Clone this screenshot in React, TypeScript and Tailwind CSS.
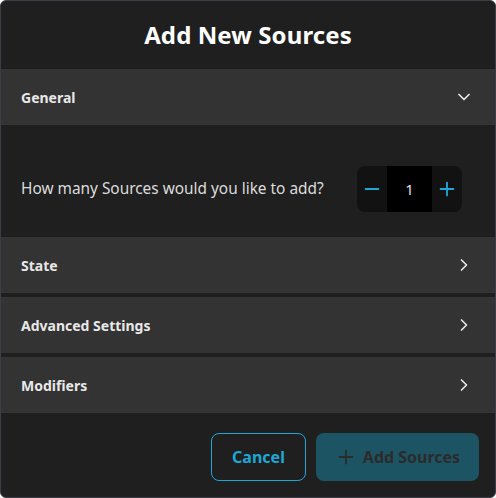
import { ChevronDown, ChevronRight, Minus, Plus } from "lucide-react";

const sections = ["State", "Advanced Settings", "Modifiers"];

export default function App() {
  return (
    <div className="w-[496px] h-[498px] bg-[#1f1f1f] border border-[#3b3e46] rounded-[6px] overflow-hidden flex flex-col font-['Noto_Sans',sans-serif] text-white">
      {/* Title */}
      <div className="h-[68px] flex items-center justify-center">
        <h1 className="text-[24px] font-bold tracking-[0.1px]">Add New Sources</h1>
      </div>

      {/* General (open) */}
      <div className="h-[56px] bg-[#333333] flex items-center justify-between pl-5 pr-[21px]">
        <span className="text-[14px] font-bold text-[#e8e8e8]">General</span>
        <ChevronDown className="w-[20px] h-[20px] text-[#e8e8e8]" strokeWidth={2} />
      </div>
      <div className="h-[105px] flex items-center justify-between pl-5 pr-[33px] pt-[23px]">
        <span className="text-[15.4px] text-[#dcdcdc]">How many Sources would you like to add?</span>
        <div className="flex h-[46px] rounded-[8px] overflow-hidden">
          <button className="w-[30px] bg-[#121212] flex items-center justify-center text-[#1ea7d4]">
            <Minus className="w-[22px] h-[22px]" strokeWidth={2} />
          </button>
          <div className="w-[45px] bg-black flex items-center justify-center text-[15px] text-[#e0e0e0]">1</div>
          <button className="w-[30px] bg-[#121212] flex items-center justify-center text-[#1ea7d4]">
            <Plus className="w-[22px] h-[22px]" strokeWidth={2} />
          </button>
        </div>
      </div>

      {/* Collapsed sections */}
      <div className="flex flex-col gap-[4px] pt-[7px]">
        {sections.map((s) => (
          <div key={s} className="h-[56px] bg-[#333333] flex items-center justify-between pl-5 pr-[21px]">
            <span className="text-[14px] font-bold text-[#e8e8e8]">{s}</span>
            <ChevronRight className="w-[20px] h-[20px] text-[#e8e8e8]" strokeWidth={2} />
          </div>
        ))}
      </div>

      {/* Footer */}
      <div className="flex-1 flex items-center justify-end gap-[10px] pr-[16px] pt-[3px]">
        <button className="w-[95px] h-[48px] rounded-[8px] border border-[#1ea7d4] text-[#1ea7d4] text-[16px] font-bold">
          Cancel
        </button>
        <button className="w-[163px] h-[48px] rounded-[8px] bg-[#1d5464] text-[#2b2b2b] text-[16px] font-bold flex items-center justify-center gap-[6px]">
          <Plus className="w-[22px] h-[22px]" strokeWidth={2} />
          Add Sources
        </button>
      </div>
    </div>
  );
}
